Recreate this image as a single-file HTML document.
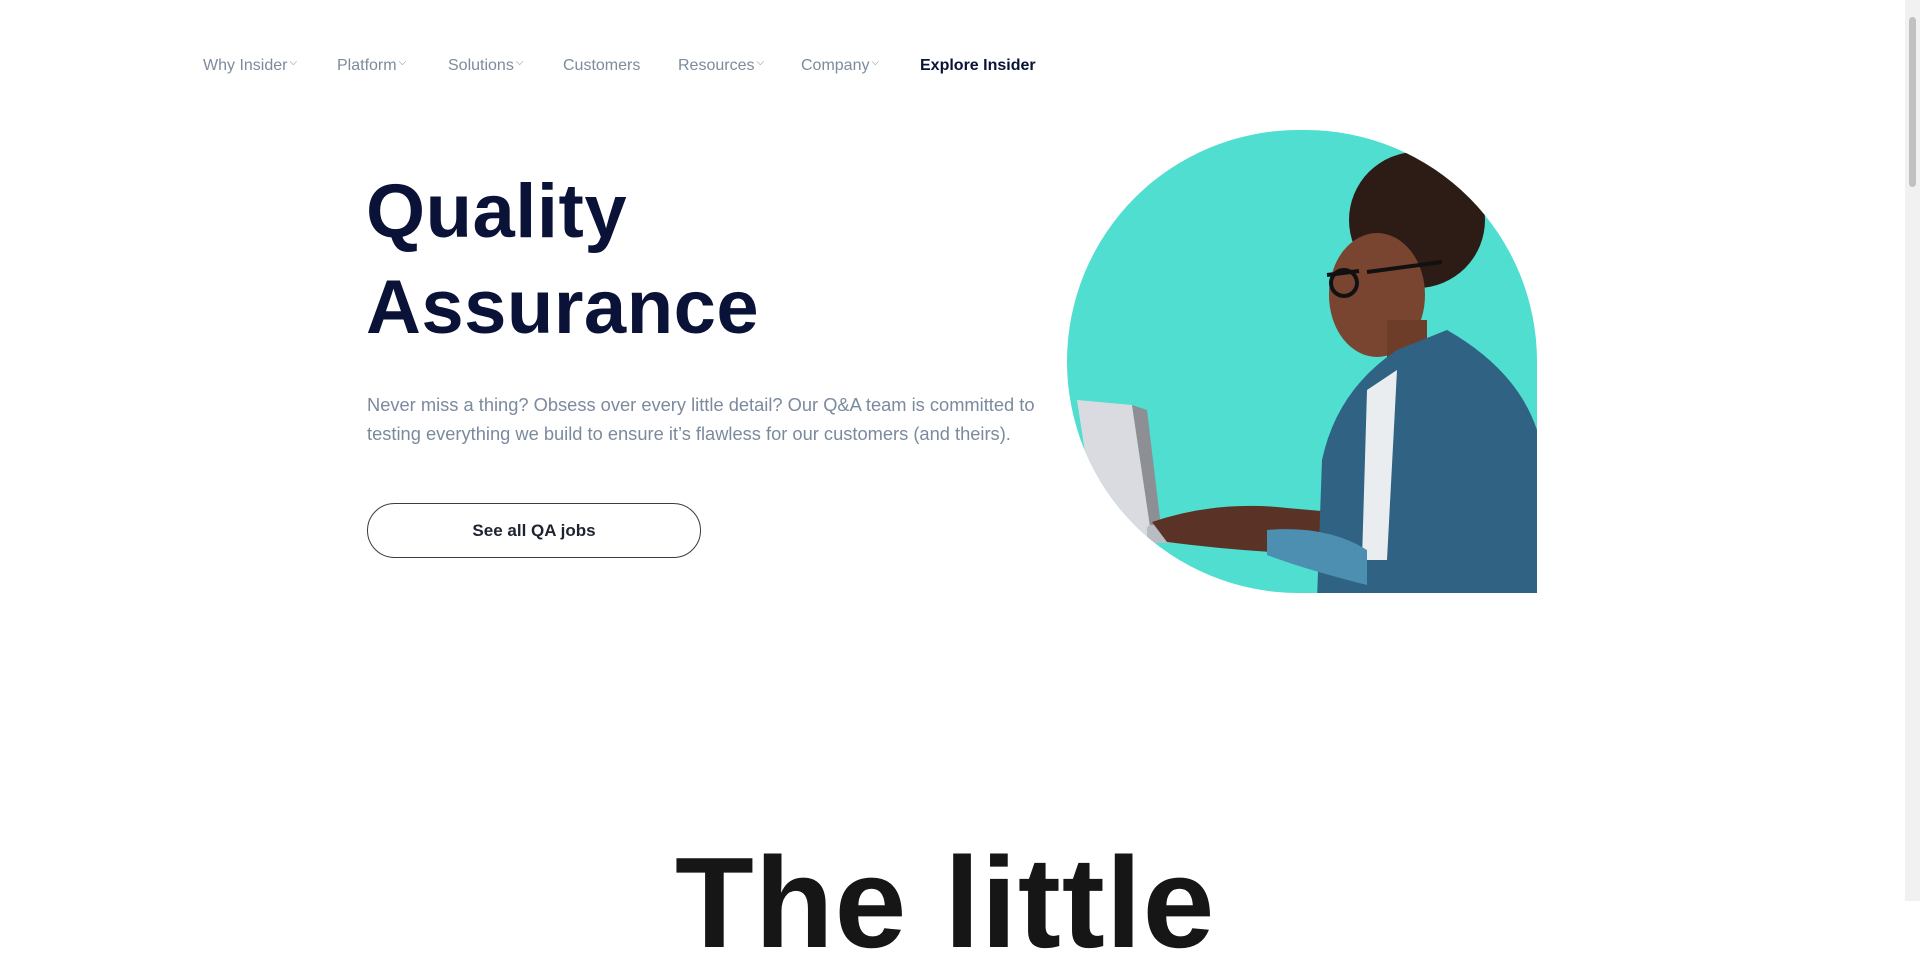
<!DOCTYPE html>
<html><head><meta charset="utf-8">
<style>
html,body{margin:0;padding:0;background:#fff;width:1920px;height:901px;overflow:hidden;font-family:"Liberation Sans",sans-serif;}
.nav{position:absolute;top:57px;left:203px;font-size:16px;color:#7d8b9c;}
.nav span{position:absolute;white-space:nowrap;}
.nav .c{font-size:10px;margin-left:2px;}
h1{position:absolute;left:366px;top:164px;margin:0;font-size:76px;line-height:96px;color:#0a1337;font-weight:700;letter-spacing:0.5px;}
p{position:absolute;left:367px;top:390px;margin:0;font-size:18.3px;line-height:29px;color:#7b8a9d;white-space:nowrap;}
.btn{position:absolute;left:367px;top:503px;width:334px;height:55px;border:1px solid #3a3a48;border-radius:28px;box-sizing:border-box;text-align:center;line-height:53px;font-size:17px;font-weight:700;color:#1f2230;}
.hero{position:absolute;left:1067px;top:130px;width:470px;height:463px;border-radius:235px 235px 0 235px;overflow:hidden;background:#4fded0;}
.big{position:absolute;left:675px;top:828px;font-size:129px;font-weight:700;color:#161616;white-space:nowrap;line-height:150px;letter-spacing:1px;}
.sb{position:absolute;right:0;top:0;width:15px;height:901px;background:#f1f1f1;}
.sb div{position:absolute;left:4px;top:17px;width:7px;height:170px;background:#c1c1c1;border-radius:4px;}
</style></head><body>
<div class="nav">
<span style="left:0">Why Insider<span class="c">⌵</span></span>
<span style="left:134px">Platform<span class="c">⌵</span></span>
<span style="left:245px">Solutions<span class="c">⌵</span></span>
<span style="left:360px">Customers</span>
<span style="left:475px">Resources<span class="c">⌵</span></span>
<span style="left:598px">Company<span class="c">⌵</span></span>
<span style="left:717px;color:#0a1337;font-weight:700">Explore Insider</span>
</div>
<h1>Quality<br>Assurance</h1>
<p>Never miss a thing? Obsess over every little detail? Our Q&amp;A team is committed to<br>testing everything we build to ensure it’s flawless for our customers (and theirs).</p>
<div class="btn">See all QA jobs</div>
<div class="hero">
<svg width="470" height="463" viewBox="0 0 470 463">
<polygon points="10,270 65,275 85,410 30,400" fill="#d9dbe0"/>
<polygon points="65,275 80,280 95,405 85,410" fill="#8d8f94"/>
<rect x="80" y="395" width="210" height="18" fill="#b9bcc2" rx="4"/>
<path d="M85,392 Q150,370 220,378 L300,385 L300,425 Q200,425 100,412 Z" fill="#5a3326"/>
<circle cx="350" cy="90" r="68" fill="#2d1c16"/>
<ellipse cx="310" cy="165" rx="48" ry="62" fill="#7a4530"/>
<path d="M260,145 l32,-4 M300,142 l75,-10" stroke="#111" stroke-width="4" fill="none"/>
<circle cx="277" cy="153" r="13" stroke="#111" stroke-width="4" fill="none"/>
<rect x="320" y="190" width="40" height="50" fill="#6e3d2a"/>
<path d="M250,470 L255,330 Q270,260 330,220 L380,200 Q450,240 470,300 L470,470 Z" fill="#2f6283"/>
<path d="M300,260 L330,240 L320,430 L295,430 Z" fill="#e9edf0"/>
<path d="M200,400 Q260,395 300,420 L300,455 Q240,440 200,425 Z" fill="#4d8fb0"/>
</svg>
</div>
<div class="big">The little</div>
<div class="sb"><div></div></div>
</body></html>
